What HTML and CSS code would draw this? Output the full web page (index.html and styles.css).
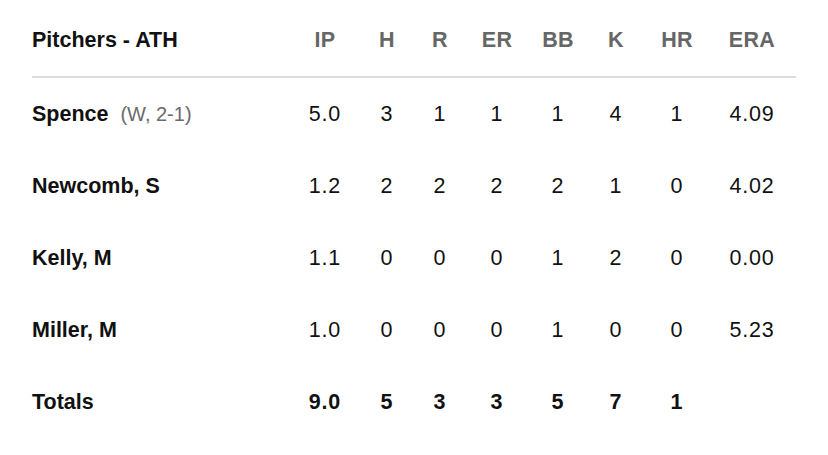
FILE: index.html
```html
<!DOCTYPE html>
<html>
<head>
<meta charset="utf-8">
<link rel="stylesheet" href="styles.css">
</head>
<body>
<div class="box">
  <div class="row head">
    <div class="name">Pitchers - ATH</div>
    <div>IP</div><div>H</div><div>R</div><div>ER</div><div>BB</div><div>K</div><div>HR</div><div>ERA</div>
  </div>
  <div class="row">
    <div class="name">Spence <span class="dec">(W, 2-1)</span></div>
    <div>5.0</div><div>3</div><div>1</div><div>1</div><div>1</div><div>4</div><div>1</div><div>4.09</div>
  </div>
  <div class="row">
    <div class="name">Newcomb, S</div>
    <div>1.2</div><div>2</div><div>2</div><div>2</div><div>2</div><div>1</div><div>0</div><div>4.02</div>
  </div>
  <div class="row">
    <div class="name">Kelly, M</div>
    <div>1.1</div><div>0</div><div>0</div><div>0</div><div>1</div><div>2</div><div>0</div><div>0.00</div>
  </div>
  <div class="row">
    <div class="name">Miller, M</div>
    <div>1.0</div><div>0</div><div>0</div><div>0</div><div>1</div><div>0</div><div>0</div><div>5.23</div>
  </div>
  <div class="row total">
    <div class="name">Totals</div>
    <div>9.0</div><div>5</div><div>3</div><div>3</div><div>5</div><div>7</div><div>1</div><div></div>
  </div>
</div>
</body>
</html>
```
FILE: styles.css
```css
html, body {
  margin: 0;
  padding: 0;
  background: #fff;
}
body {
  font-family: "Liberation Sans", Arial, sans-serif;
  color: #111;
}
.box {
  padding: 4px 32px 0 32px;
}
.row {
  display: grid;
  grid-template-columns: 262px 62px 62px 44px 70px 52px 64px 58px 92px;
  height: 72px;
  align-items: center;
  font-size: 21.5px;
  text-align: center;
  letter-spacing: 0.8px;
}
.row .name {
  text-align: left;
  font-weight: 700;
  letter-spacing: 0;
}
.head {
  border-bottom: 2px solid #dcdcdc;
  color: #666;
  font-weight: 700;
  letter-spacing: 0.3px;
}
.head .name {
  color: #111;
}
.dec {
  font-weight: 400;
  color: #6b6b6b;
  font-size: 20px;
  margin-left: 6px;
}
.total {
  font-weight: 700;
}
```
